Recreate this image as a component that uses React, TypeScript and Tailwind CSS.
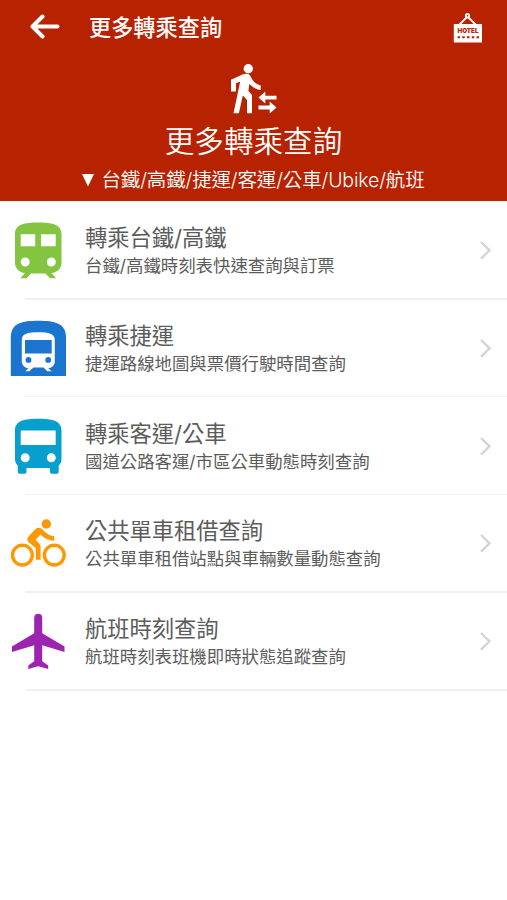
import React from "react";

function TrainIcon() {
  return (
    <svg viewBox="0 0 76 98" className="h-[98px] w-[76px] shrink-0">
      <path
        fill="#83c441"
        fillRule="evenodd"
        d="M15 33C15 23 25 21.5 38.200 21.500S61.500 23 61.500 33V62C61.500 67.500 57 71.500 51.500 72L55.500 76.500V77.200H50L45.500 72.500H31L26.500 77.200H21V76.500L25 72C19.500 71.500 15 67.500 15 62ZM20.700 33.200V45.200H35.200V33.200ZM41 33.200V45.200H55.700V33.200ZM25.200 56.500A4.500 4.500 0 1 0 25.200 65.500A4.500 4.500 0 1 0 25.200 56.500ZM51.300 56.500A4.500 4.500 0 1 0 51.300 65.500A4.500 4.500 0 1 0 51.300 56.500Z"
      />
    </svg>
  );
}

function MetroIcon() {
  return (
    <svg viewBox="0 0 76 98" className="h-[98px] w-[76px] shrink-0">
      <path fill="#1b74ce" d="M10.800 77V38.500C10.800 24 22 21.700 38.300 21.700S66 24 66 38.500V77Z" />
      <path
        fill="#fff"
        fillRule="evenodd"
        d="M21.800 41C21.800 34.500 28 33.200 38.300 33.200S54.800 34.500 54.800 41V62.500C54.800 66.500 51.500 69 48.300 69.200L51.200 71.700V72.300H47.300L43.500 68.500H33.300L29.500 72.300H25.600V71.700L28.500 69.200C25 69 21.800 66.500 21.800 62.500ZM25 41V54.500H51.700V41ZM28.500 58A2.900 2.900 0 1 0 28.500 63.800A2.900 2.900 0 1 0 28.500 58ZM48.200 58A2.900 2.900 0 1 0 48.200 63.800A2.900 2.900 0 1 0 48.200 58Z"
      />
    </svg>
  );
}

function BusIcon() {
  return (
    <svg viewBox="0 0 76 98" className="h-[98px] w-[76px] shrink-0">
      <path
        fill="#069fce"
        fillRule="evenodd"
        d="M15 33.500C15 23.500 25 21.800 38.200 21.800S61.500 23.500 61.500 33.500V62C61.500 64.700 60.500 67 58.700 68.500V74.200Q58.700 76.800 56.200 76.800H52.500Q50 76.800 50 74.200V71H26.500V74.200Q26.500 76.800 24 76.800H20.300Q17.800 76.800 17.800 74.200V68.500C16 67 15 64.700 15 62ZM20.700 33.500V48H55.700V33.500ZM25.200 56.300A4.500 4.500 0 1 0 25.200 65.300A4.500 4.500 0 1 0 25.200 56.300ZM51.300 56.300A4.500 4.500 0 1 0 51.300 65.300A4.500 4.500 0 1 0 51.300 56.300Z"
      />
    </svg>
  );
}

function BikeIcon() {
  return (
    <svg viewBox="0 0 76 98" className="h-[98px] w-[76px] shrink-0">
      <g fill="none" stroke="#ff9800" strokeWidth="3.400">
        <circle cx="22.400" cy="61.100" r="9.900" />
        <circle cx="54.300" cy="61.100" r="9.900" />
      </g>
      <circle cx="46.300" cy="30" r="4.700" fill="#ff9800" />
      <path
        fill="#ff9800"
        d="M35.500 35C37.500 33.200 40 33.300 41.500 34.700L45.500 38.500C47.700 40.500 50.500 41.900 54.200 41.900V46.800C49 46.800 44.900 44.900 41.600 41.600L40.500 40.500L35.600 45.800L39.300 49.700Q40.600 51 40.600 52.800V65.800H35.800V54.300L28.500 47.900C26.900 46.500 26.900 44 28.500 42.400Z"
      />
    </svg>
  );
}

function PlaneIcon() {
  return (
    <svg viewBox="0 0 76 98" className="h-[98px] w-[76px] shrink-0">
      <path
        fill="#9c24ae"
        d="M34.200 25.700A4 4 0 0 1 42.200 25.700V41.300L64.500 54.500V60L42.200 53.200V69.200L48.200 73.500V77L38.200 74.300L28.300 77V73.500L34.200 69.200V53.200L12 60V54.500L34.200 41.300Z"
      />
    </svg>
  );
}

const items = [
  { icon: <TrainIcon />, title: "轉乘台鐵/高鐵", detail: "台鐵/高鐵時刻表快速查詢與訂票" },
  { icon: <MetroIcon />, title: "轉乘捷運", detail: "捷運路線地圖與票價行駛時間查詢" },
  { icon: <BusIcon />, title: "轉乘客運/公車", detail: "國道公路客運/市區公車動態時刻查詢" },
  { icon: <BikeIcon />, title: "公共單車租借查詢", detail: "公共單車租借站點與車輛數量動態查詢" },
  { icon: <PlaneIcon />, title: "航班時刻查詢", detail: "航班時刻表班機即時狀態追蹤查詢" },
];

export default function App() {
  return (
    <div lang="zh-TW" className="h-[900px] w-full overflow-hidden bg-white font-['Inter','Noto_Sans_CJK_TC',sans-serif]">
      <header className="h-[201px] bg-[#b72200] text-white">
        <div className="flex h-[54px] items-center pl-[30px] pr-[24px]">
          <svg viewBox="0 0 30 26" className="h-[26px] w-[30px]" fill="none" stroke="#fff" strokeWidth="4" strokeLinecap="round" strokeLinejoin="round">
            <path d="M12.500 2.500L2.500 12.500L12.500 22.500M3 12.500H27.500" />
          </svg>
          <h1 className="ml-[29px] flex-1 whitespace-nowrap pt-[2px] text-[22.200px] font-medium leading-[32px]">更多轉乘查詢</h1>
          <svg viewBox="0 0 30 32" className="h-[32px] w-[30px]">
            <path d="M6 14L14.500 5.500L23 14" fill="none" stroke="#fff" strokeWidth="1.800" />
            <circle cx="14.500" cy="4.700" r="2.600" fill="#fff" />
            <circle cx="14.500" cy="4.700" r="0.800" fill="#b72200" />
            <rect x="0.800" y="13" width="28.200" height="18.500" rx="0.500" fill="#fff" />
            <text x="15" y="22.300" textAnchor="middle" textLength="21" lengthAdjust="spacingAndGlyphs" fontSize="6.500" fontWeight="900" fill="#b72200">HOTEL</text>
            <path d="M4.500 26.300H26" stroke="#b72200" strokeWidth="2" strokeDasharray="2.500 2.250" />
          </svg>
        </div>
        <div className="flex flex-col items-center">
          <svg viewBox="0 0 48 52" className="mt-[9px] h-[52px] w-[48px]" fill="#fff">
            <circle cx="18.300" cy="5.700" r="4.700" />
            <path d="M12.500 11.500C16 10 19 10.800 20.300 13L22.300 16.600C24.200 19.700 27 21.500 30.700 22.500V27C26 26.300 22 24 19.400 20.700L18.400 28L22 32V50.300H17V37L12.800 32.500L8.900 50.300H3.500L10.200 18.500L6 20.300V28.500H1V16.800Z" />
            <path d="M28.500 34.500L35.300 28.600V32.800H46.500V36.500H35.300V40.400ZM46.500 44.500L39.700 38.600V42.600H28.500V46.400H39.700V50.400Z" />
          </svg>
          <h2 className="mt-[5px] whitespace-nowrap text-[29.600px] font-[350] leading-[42px]">更多轉乘查詢</h2>
          <p className="mt-[4px] flex items-center whitespace-nowrap text-[19.500px] font-[350] leading-[28px] tracking-[-0.150px]">
            <svg viewBox="0 0 12 13" className="mr-[7px] h-[13px] w-[12px]">
              <path d="M0 0H12L6 12.500Z" fill="#fff" />
            </svg>
            台鐵/高鐵/捷運/客運/公車/Ubike/航班
          </p>
        </div>
      </header>
      <main>
        {items.map((item) => (
          <section key={item.title} className="h-[97.800px]">
            <div className="flex h-[97px] items-start">
              {item.icon}
              <div className="ml-[9px] flex-1 whitespace-nowrap pt-[21px] text-[#5c5c5c]">
                <h3 className="text-[22.300px] leading-[32px] tracking-[-0.050px]">{item.title}</h3>
                <p className="text-[17.400px] leading-[24px]">{item.detail}</p>
              </div>
              <svg viewBox="0 0 14 22" className="mr-[14px] mt-[38px] h-[22px] w-[14px]" fill="none" stroke="#d4d4d4" strokeWidth="2.400">
                <path d="M2 3L10.500 11.300L2 19.600" />
              </svg>
            </div>
            <div className="ml-[25px] h-[1.500px] bg-[#f0f0f0]" />
          </section>
        ))}
      </main>
    </div>
  );
}
